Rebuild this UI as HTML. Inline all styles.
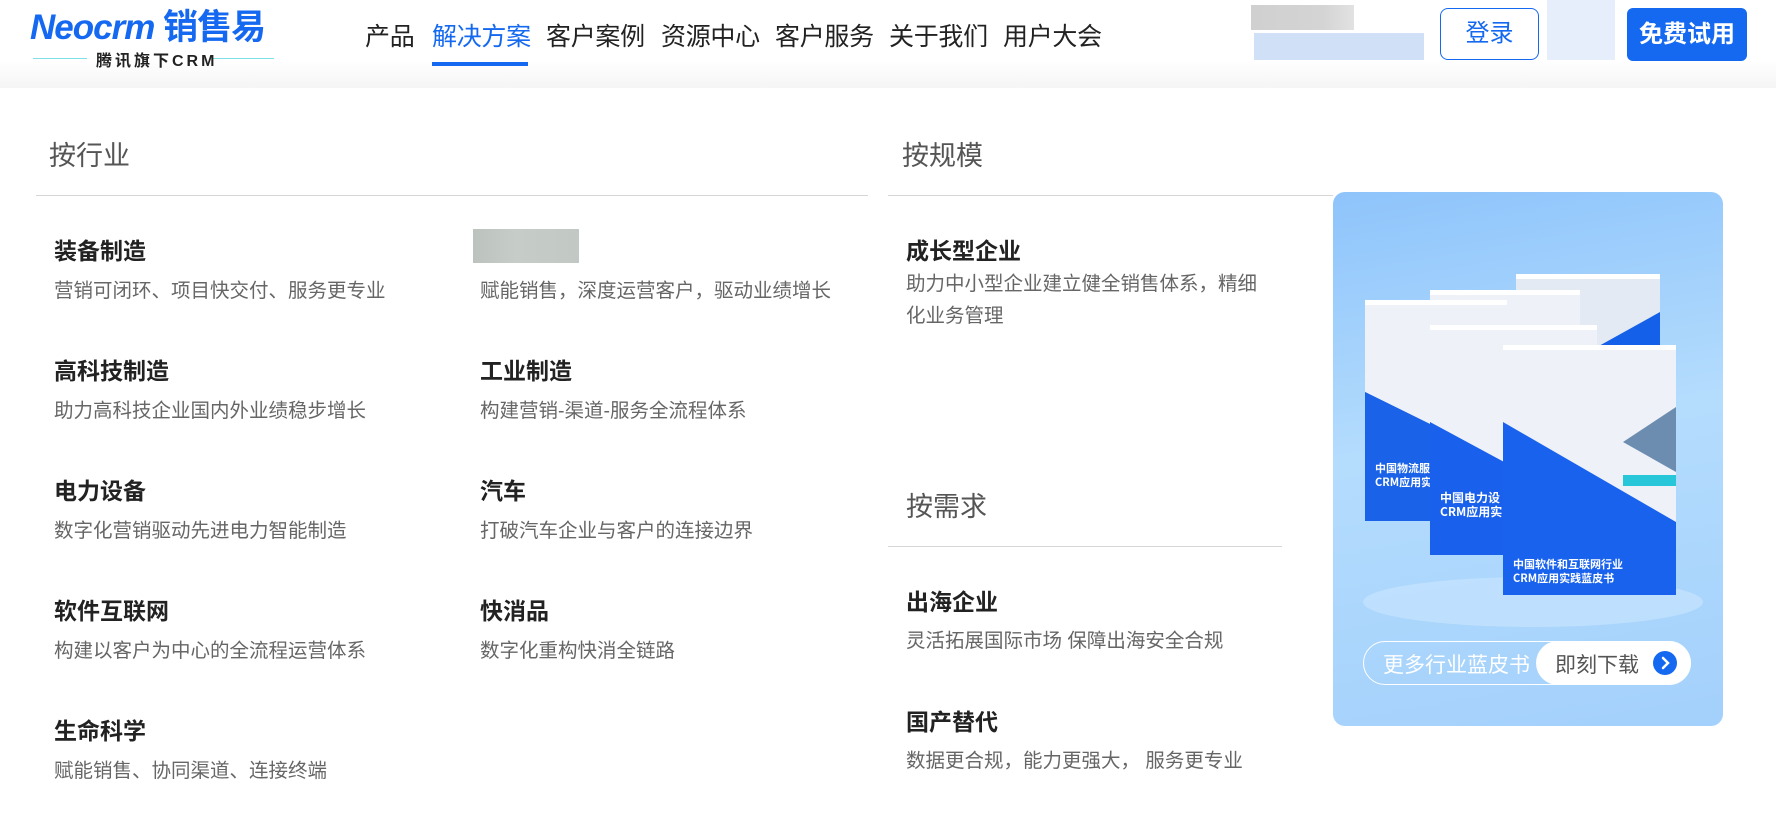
<!DOCTYPE html>
<html><head><meta charset="utf-8"><style>
*{margin:0;padding:0;box-sizing:border-box}
body{width:1776px;height:819px;overflow:hidden;background:#fff;font-family:"Liberation Sans","Noto Sans CJK SC",sans-serif;position:relative;color:#333}
.a{position:absolute;white-space:nowrap}
.hdr{position:absolute;left:0;top:0;width:1776px;height:88px;background:linear-gradient(#fff 0,#fff 60px,#f5f5f5 88px)}
.nav{font-size:25px;color:#222;top:17px;letter-spacing:-0.3px}
.h{font-size:27px;color:#555}
.t{font-size:23px;font-weight:bold;color:#222}
.d{font-size:19.5px;color:#666}
.line{position:absolute;height:1px;background:#d6d6d6}
</style></head><body>
<div class="hdr"></div>
<div class="a" style="left:30px;top:-1px;font-size:35px;font-weight:bold;font-style:italic;color:#1469f0;letter-spacing:-1px">Neocrm <span style="font-style:normal">销售易</span></div>
<div class="a" style="left:33px;top:58px;width:54px;height:1px;background:#7fe0e8"></div>
<div class="a" style="left:212px;top:58px;width:62px;height:1px;background:#7fe0e8"></div>
<div class="a" style="left:96px;top:47px;font-size:16px;font-weight:bold;color:#222;letter-spacing:3px">腾讯旗下CRM</div>
<div class="a nav" style="left:365px">产品</div>
<div class="a nav" style="left:432px;color:#1469f0">解决方案</div>
<div class="a" style="left:432px;top:62px;width:96px;height:4px;background:#1469f0"></div>
<div class="a nav" style="left:546px">客户案例</div>
<div class="a nav" style="left:661px">资源中心</div>
<div class="a nav" style="left:775px">客户服务</div>
<div class="a nav" style="left:889px">关于我们</div>
<div class="a nav" style="left:1003px">用户大会</div>
<div class="a" style="left:1251px;top:5px;width:103px;height:25px;background:linear-gradient(90deg,#cfd0cf 0,#d4d4d4 70%,#e2e2e2 100%)"></div>
<div class="a" style="left:1254px;top:33px;width:170px;height:27px;background:#cfe0f7"></div>
<div class="a" style="left:1440px;top:8px;width:99px;height:52px;border:1.5px solid #1469f0;border-radius:8px;color:#1469f0;font-size:24px;text-align:center;line-height:49px">登录</div>
<div class="a" style="left:1547px;top:0;width:68px;height:60px;background:#e6eefb"></div>
<div class="a" style="left:1627px;top:8px;width:120px;height:53px;background:#1469f0;border-radius:6px;color:#fff;font-size:24px;font-weight:bold;text-align:center;line-height:53px">免费试用</div>

<div class="a h" style="left:49px;top:134px">按行业</div>
<div class="line" style="left:36px;top:195px;width:832px"></div>
<div class="a h" style="left:902px;top:134px">按规模</div>
<div class="line" style="left:888px;top:195px;width:445px"></div>

<div class="a t" style="left:54px;top:232px">装备制造</div>
<div class="a d" style="left:54px;top:274px">营销可闭环、项目快交付、服务更专业</div>
<div class="a" style="left:473px;top:229px;width:106px;height:34px;background:linear-gradient(90deg,#bcc3bf,#c6ccc8 40%,#c2c8c4)"></div>
<div class="a d" style="left:480px;top:274px">赋能销售，深度运营客户，驱动业绩增长</div>

<div class="a t" style="left:54px;top:352px">高科技制造</div>
<div class="a d" style="left:54px;top:394px">助力高科技企业国内外业绩稳步增长</div>
<div class="a t" style="left:480px;top:352px">工业制造</div>
<div class="a d" style="left:480px;top:394px">构建营销-渠道-服务全流程体系</div>

<div class="a t" style="left:54px;top:472px">电力设备</div>
<div class="a d" style="left:54px;top:514px">数字化营销驱动先进电力智能制造</div>
<div class="a t" style="left:480px;top:472px">汽车</div>
<div class="a d" style="left:480px;top:514px">打破汽车企业与客户的连接边界</div>

<div class="a t" style="left:54px;top:592px">软件互联网</div>
<div class="a d" style="left:54px;top:634px">构建以客户为中心的全流程运营体系</div>
<div class="a t" style="left:480px;top:592px">快消品</div>
<div class="a d" style="left:480px;top:634px">数字化重构快消全链路</div>

<div class="a t" style="left:54px;top:712px">生命科学</div>
<div class="a d" style="left:54px;top:754px">赋能销售、协同渠道、连接终端</div>

<div class="a t" style="left:906px;top:232px">成长型企业</div>
<div class="a d" style="left:906px;top:268px;white-space:normal;width:360px;line-height:32px">助力中小型企业建立健全销售体系，精细化业务管理</div>

<div class="a h" style="left:906px;top:485px">按需求</div>
<div class="line" style="left:888px;top:546px;width:394px"></div>
<div class="a t" style="left:906px;top:583px">出海企业</div>
<div class="a d" style="left:906px;top:624px">灵活拓展国际市场 保障出海安全合规</div>
<div class="a t" style="left:906px;top:703px">国产替代</div>
<div class="a d" style="left:906px;top:744px">数据更合规，能力更强大， 服务更专业</div>

<div class="a" style="left:1333px;top:192px;width:390px;height:534px;border-radius:12px;overflow:hidden;background:linear-gradient(170deg,#8ec4fb 0,#b4dcfd 45%,#a3d0fc 100%)">
<svg width="390" height="534" style="position:absolute;left:0;top:0">
<ellipse cx="200" cy="410" rx="170" ry="25" fill="#c6e4fd" opacity=".7"/>
<g>
<rect x="183" y="82" width="144" height="230" fill="#e4eaf3"/>
<rect x="183" y="82" width="144" height="5" fill="#fff"/>
<polygon points="183,200 327,120 327,312 183,312" fill="#1560e8"/>
</g>
<g>
<rect x="97" y="98" width="150" height="260" fill="#eef2f8"/>
<rect x="97" y="98" width="150" height="5" fill="#fff"/>
<polygon points="97,230 247,150 247,358 97,358" fill="#1b63e6"/>
</g>
<g>
<rect x="32" y="108" width="142" height="221" fill="#eef2f8"/>
<rect x="32" y="108" width="142" height="5" fill="#fff"/>
<polygon points="32,200 174,270 174,329 32,329" fill="#1a62e8"/>
<polygon points="32,200 174,270 174,329 32,329" fill="#1a62e8"/>
<text x="42" y="280" font-size="11" font-weight="bold" fill="#fff" font-family="Noto Sans CJK SC">中国物流服</text>
<text x="42" y="294" font-size="11" font-weight="bold" fill="#fff" font-family="Noto Sans CJK SC">CRM应用实</text>
</g>
<g>
<rect x="97" y="133" width="167" height="230" fill="#eef2f8"/>
<rect x="97" y="133" width="167" height="5" fill="#fff"/>
<polygon points="97,230 264,320 264,363 97,363" fill="#1960ec"/>
<text x="107" y="310" font-size="12" font-weight="bold" fill="#fff" font-family="Noto Sans CJK SC">中国电力设</text>
<text x="107" y="324" font-size="12" font-weight="bold" fill="#fff" font-family="Noto Sans CJK SC">CRM应用实</text>
</g>
<g>
<rect x="170" y="153" width="173" height="250" fill="#eef2f8"/>
<rect x="170" y="153" width="173" height="5" fill="#fff"/>
<polygon points="170,230 343,330 343,403 170,403" fill="#1862ee"/>
<polygon points="290,250 343,215 343,280" fill="#6c8db0"/>
<rect x="290" y="283" width="53" height="11" fill="#27c6d8"/>
<text x="180" y="376" font-size="11" font-weight="bold" fill="#fff" font-family="Noto Sans CJK SC">中国软件和互联网行业</text>
<text x="180" y="390" font-size="11" font-weight="bold" fill="#fff" font-family="Noto Sans CJK SC">CRM应用实践蓝皮书</text>
</g>
</svg>
</div>
<div class="a" style="left:1363px;top:641px;width:328px;height:44px;border:1.5px solid #fff;border-radius:22px"></div>
<div class="a" style="left:1536px;top:641px;width:155px;height:44px;background:#fff;border-radius:22px"></div>
<div class="a" style="left:1383px;top:649px;font-size:21px;color:#fff">更多行业蓝皮书</div>
<div class="a" style="left:1555px;top:649px;font-size:21px;color:#555">即刻下载</div>
<div class="a" style="left:1653px;top:651px;width:24px;height:24px;border-radius:50%;background:#1469f0"><svg width="24" height="24"><path d="M10 7l5 5-5 5" stroke="#fff" stroke-width="2.5" fill="none" stroke-linecap="round"/></svg></div>
</body></html>
